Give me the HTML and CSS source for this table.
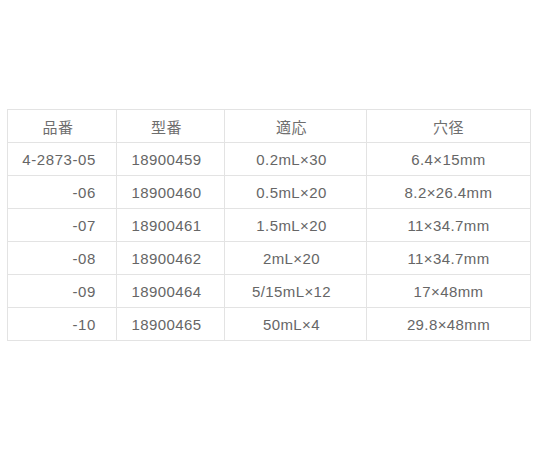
FILE: index.html
```html
<!DOCTYPE html>
<html lang="ja">
<head>
<meta charset="utf-8">
<link rel="stylesheet" href="styles.css">
</head>
<body>
<table class="spec">
  <colgroup>
    <col class="w1"><col class="w2"><col class="w3"><col class="w4">
  </colgroup>
  <thead>
    <tr><th class="c1">品番</th><th class="c2">型番</th><th class="c3">適応</th><th class="c4">穴径</th></tr>
  </thead>
  <tbody>
    <tr><td class="c1">4-2873-05</td><td class="c2">18900459</td><td class="c3">0.2mL×30</td><td class="c4">6.4×15mm</td></tr>
    <tr><td class="c1">-06</td><td class="c2">18900460</td><td class="c3">0.5mL×20</td><td class="c4">8.2×26.4mm</td></tr>
    <tr><td class="c1">-07</td><td class="c2">18900461</td><td class="c3">1.5mL×20</td><td class="c4">11×34.7mm</td></tr>
    <tr><td class="c1">-08</td><td class="c2">18900462</td><td class="c3">2mL×20</td><td class="c4">11×34.7mm</td></tr>
    <tr><td class="c1">-09</td><td class="c2">18900464</td><td class="c3">5/15mL×12</td><td class="c4">17×48mm</td></tr>
    <tr><td class="c1">-10</td><td class="c2">18900465</td><td class="c3">50mL×4</td><td class="c4">29.8×48mm</td></tr>
  </tbody>
</table>
</body>
</html>
```
FILE: styles.css
```css
html, body {
  margin: 0;
  padding: 0;
  background: #ffffff;
}
body {
  padding: 109px 0 0 7px;
  font-family: "Liberation Sans", Arial, "Noto Sans CJK JP", sans-serif;
  color: #666666;
}
.spec {
  border-collapse: collapse;
  table-layout: fixed;
  width: 523px;
}
.spec .w1 { width: 109px; }
.spec .w2 { width: 108px; }
.spec .w3 { width: 142px; }
.spec .w4 { width: 164px; }
.spec tr {
  height: 33px;
}
.spec th, .spec td {
  border: 1px solid #e3e3e3;
  padding: 0;
  font-family: "Liberation Sans", Arial, "Noto Sans CJK JP", sans-serif;
  font-size: 15px;
  font-weight: normal;
  letter-spacing: 0.4px;
  text-align: center;
  vertical-align: middle;
}
.spec th {
  color: #6e6e6e;
}
.spec td.c1 {
  text-align: right;
  padding-right: 20px;
  letter-spacing: 0.6px;
}
.spec td.c2, .spec td.c3, .spec th.c1, .spec th.c2, .spec th.c3 {
  padding-right: 8px;
}
```
